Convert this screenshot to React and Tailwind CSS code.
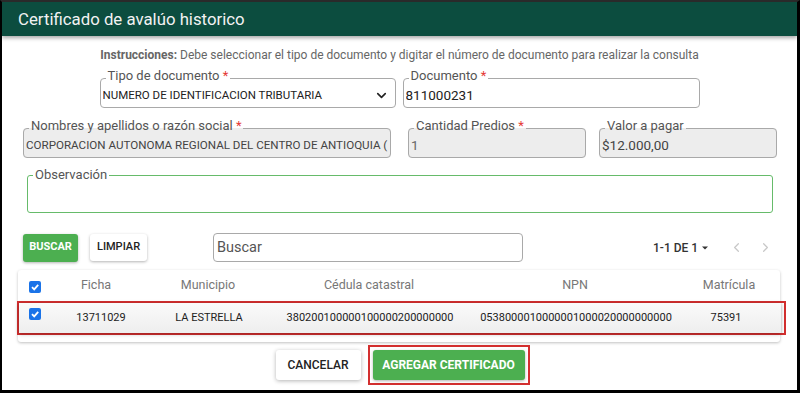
import { ChevronDown, ChevronLeft, ChevronRight } from "lucide-react";

const font = { fontFamily: "Roboto, 'Liberation Sans', sans-serif" };

// outlined field: label sits a bit above the top border line
function Field({ label, required, gray, className, children }) {
  return (
    <fieldset
      className={`border border-[#a9a9a9] rounded-[4px] px-[2px] pb-0 m-0 min-w-0 ${gray ? "bg-[#ededed]" : "bg-white"} ${className}`}
    >
      <legend className="ml-[3px] px-[2px] pb-[5px] text-[13px] leading-[14px] text-[#555]">
        {label}
        {required && <span className="text-[#e53935]"> *</span>}
      </legend>
      <div className="h-[23px] -mt-[4px] flex items-center overflow-hidden whitespace-nowrap">{children}</div>
    </fieldset>
  );
}

function Check() {
  return (
    <span className="w-[12px] h-[12px] rounded-[2px] bg-[#1a73e8] flex items-center justify-center">
      <svg width="10" height="10" viewBox="0 0 10 10">
        <path d="M2 5.2 L4.2 7.4 L8.2 2.8" stroke="white" strokeWidth="1.8" fill="none" />
      </svg>
    </span>
  );
}

const cols = "grid grid-cols-[32px_92px_132px_190px_222px_86px] items-center";

export default function App() {
  return (
    <div style={font} className="w-[800px] h-[393px] overflow-hidden bg-white border-t-2 border-t-[#2a2a2a] border-l-2 border-l-black border-r-[3px] border-r-black border-b-[3px] border-b-black flex flex-col">
      <div className="h-[34px] shrink-0 bg-[#0c4d3f] flex items-center pl-[16px] shadow-[0_2px_4px_rgba(0,0,0,0.35)] relative">
        <h1 className="text-[16.8px] text-[#f2f2f2] leading-none">Certificado de avalúo historico</h1>
      </div>

      <p className="mt-[12px] text-center text-[12px] leading-[14px] text-[#666]">
        <span className="font-bold">Instrucciones:</span> Debe seleccionar el tipo de documento y digitar el número de documento para realizar la consulta
      </p>

      <div className="mt-[7px] flex justify-center gap-[7px]">
        <Field label="Tipo de documento" required className="w-[296px]">
          <div className="w-full flex items-center justify-between pr-[4px]">
            <span className="text-[11.5px] text-[#222]">NUMERO DE IDENTIFICACION TRIBUTARIA</span>
            <ChevronDown size={15} strokeWidth={2.6} className="text-[#222]" />
          </div>
        </Field>
        <Field label="Documento" required className="w-[297px]">
          <span className="text-[13.5px] text-[#222]">811000231</span>
        </Field>
      </div>

      <div className="mt-[11px] flex ml-[21px]">
        <Field label="Nombres y apellidos o razón social" required gray className="w-[368px]">
          <span className="block w-full overflow-hidden whitespace-nowrap text-[11.6px] text-[#444]">
            CORPORACION AUTONOMA REGIONAL DEL CENTRO DE ANTIOQUIA (
          </span>
        </Field>
        <Field label="Cantidad Predios" required gray className="w-[178px] ml-[17px]">
          <span className="text-[13.5px] text-[#666]">1</span>
        </Field>
        <Field label="Valor a pagar" gray className="w-[178px] ml-[13px]">
          <span className="text-[13.5px] text-[#444]">$12.000,00</span>
        </Field>
      </div>

      <div className="mt-[10px] ml-[25px]">
        <fieldset className="w-[746px] border border-[#66bb6a] rounded-[3px] px-[2px] m-0 min-w-0">
          <legend className="ml-[3px] px-[2px] text-[13px] leading-[14px] text-[#555]">Observación</legend>
          <div className="h-[30px]" />
        </fieldset>
      </div>

      <div className="mt-[20px] flex items-center">
        <button className="ml-[21px] w-[55px] h-[28px] rounded-[3px] bg-[#4caf50] text-white text-[11px] font-bold shadow-[0_1px_3px_rgba(0,0,0,0.3)]">
          BUSCAR
        </button>
        <button className="ml-[12px] w-[57px] h-[27px] rounded-[3px] bg-white text-[#222] text-[11px] font-medium shadow-[0_1px_3px_rgba(0,0,0,0.3)]">
          LIMPIAR
        </button>
        <div className="ml-[66px] w-[310px] h-[29px] border border-[#a9a9a9] rounded-[4px] flex items-center pl-[3px]">
          <span className="text-[14.5px] text-[#555]">Buscar</span>
        </div>
        <div className="ml-[130px] flex items-center text-[12px] font-medium text-[#333]">
          1-1 DE 1
          <svg width="8" height="8" viewBox="0 0 8 8" className="ml-[3px]">
            <path d="M1 2.5 L7 2.5 L4 5.5 Z" fill="#333" />
          </svg>
        </div>
        <ChevronLeft size={15} className="ml-[20px] text-[#c8c8c8]" />
        <ChevronRight size={15} className="ml-[14px] text-[#c8c8c8]" />
      </div>

      <div className="mt-[8px] ml-[16px] w-[762px] rounded-[3px] shadow-[0_1px_3px_rgba(0,0,0,0.25)] pb-[7px]">
        <div className={`${cols} h-[31px] text-[12.5px] text-[#777] text-center`}>
          <span className="flex justify-center pl-[2px] pt-[2px]"><Check /></span>
          <span>Ficha</span>
          <span>Municipio</span>
          <span>Cédula catastral</span>
          <span>NPN</span>
          <span>Matrícula</span>
        </div>
        <div className="-ml-[1px] w-[769px] border-2 border-[#d32f2f]">
          <div className={`${cols} h-[30px] text-[11px] text-[#222] text-center bg-gradient-to-b from-[#fafafa] to-[#eeeeee] shadow-[0_1px_4px_rgba(0,0,0,0.3)] w-[762px]`}>
            <span className="flex justify-center self-start pt-[5px]"><Check /></span>
            <span className="pl-[8px]">13711029</span>
            <span>LA ESTRELLA</span>
            <span>380200100000100000200000000</span>
            <span>0538000010000001000020000000000</span>
            <span className="-ml-[8px]">75391</span>
          </div>
        </div>
      </div>

      <div className="mt-[3px] flex justify-center items-center gap-[7px] pl-[6px]">
        <button className="w-[85px] h-[30px] rounded-[3px] bg-white text-[#222] text-[12px] font-medium shadow-[0_1px_4px_rgba(0,0,0,0.3)]">
          CANCELAR
        </button>
        <div className="border-2 border-[#d32f2f] p-[3px]">
          <button className="w-[152px] h-[30px] rounded-[3px] bg-[#4caf50] text-white text-[12px] font-bold shadow-[0_1px_3px_rgba(0,0,0,0.3)]">
            AGREGAR CERTIFICADO
          </button>
        </div>
      </div>
    </div>
  );
}
